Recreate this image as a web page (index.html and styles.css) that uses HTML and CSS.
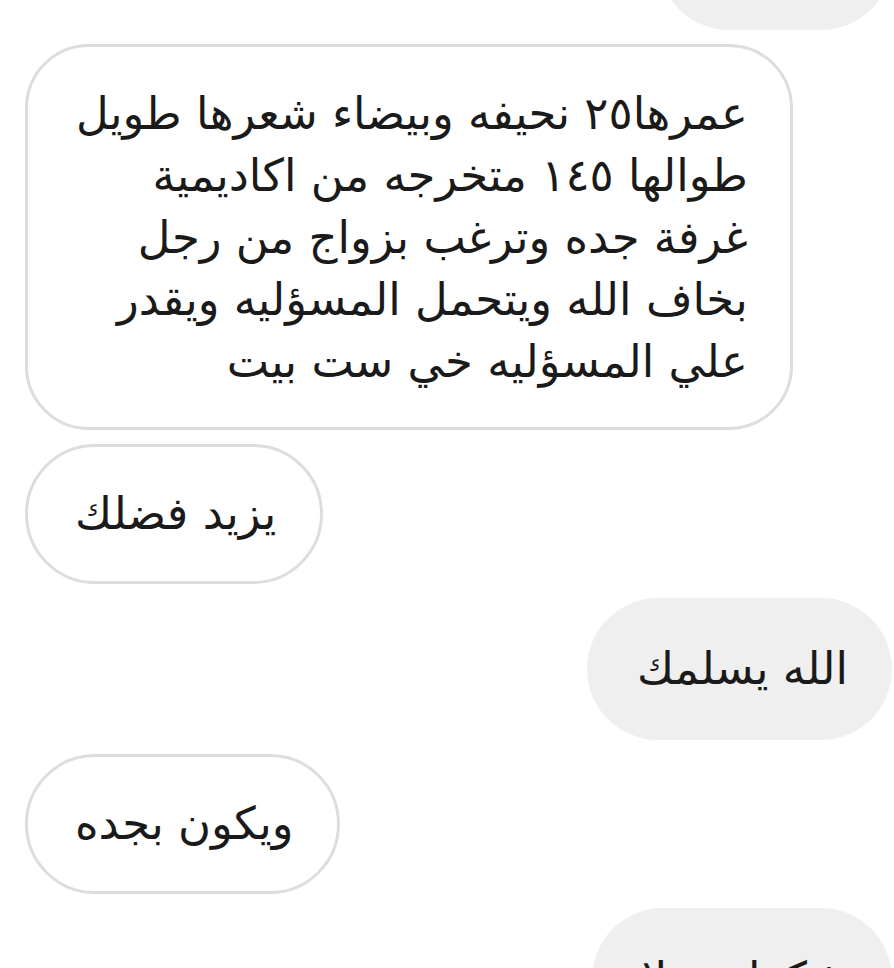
FILE: index.html
```html
<!DOCTYPE html>
<html lang="ar">
<head>
    <meta charset="UTF-8">
    <meta name="viewport" content="width=device-width, initial-scale=1.0">
    <title>محادثة</title>
    <link rel="stylesheet" href="styles.css">
</head>
<body>

    <!-- Message thread -->
    <div class="thread">
        <div class="bubble sent">تمام ان</div>

        <div class="bubble received long">
            عمرها٢٥ نحيفه وبيضاء شعرها طويل<br>
            طوالها ١٤٥ متخرجه من اكاديمية<br>
            غرفة جده وترغب بزواج من رجل<br>
            بخاف الله ويتحمل المسؤليه ويقدر<br>
            علي المسؤليه خي ست بيت
        </div>

        <div class="bubble received">يزيد فضلك</div>

        <div class="bubble sent">الله يسلمك</div>

        <div class="bubble received">ويكون بجده</div>

        <div class="bubble sent">شكرا جزيلا</div>
    </div>

</body>
</html>
```

FILE: styles.css
```css
body {
    margin: 0;
    padding: 0;
    background-color: #ffffff;
    font-family: "DejaVu Sans", "Noto Sans", sans-serif;
    color: #1a1a1a;
    overflow: hidden;
}

/* Thread of messages */
.thread {
    display: flex;
    flex-direction: column;
    gap: 14px;
    margin-top: -112px;
    padding: 0 2px 0 25px;
}

.bubble {
    direction: rtl;
    text-align: right;
    font-size: 45px;
    line-height: 62px;
    padding: 40px 44px 40px 50px;
    border-radius: 71px;
    white-space: nowrap;
}

/* Messages from the other person */
.bubble.received {
    align-self: flex-start;
    background-color: #ffffff;
    border: 3px solid #dddddd;
    padding: 36px 44px 36px 47px;
}

.bubble.received.long {
    border-radius: 64px;
    padding: 36px 42px 34px 48px;
}

/* My messages */
.bubble.sent {
    align-self: flex-end;
    background-color: #efefef;
}
```
